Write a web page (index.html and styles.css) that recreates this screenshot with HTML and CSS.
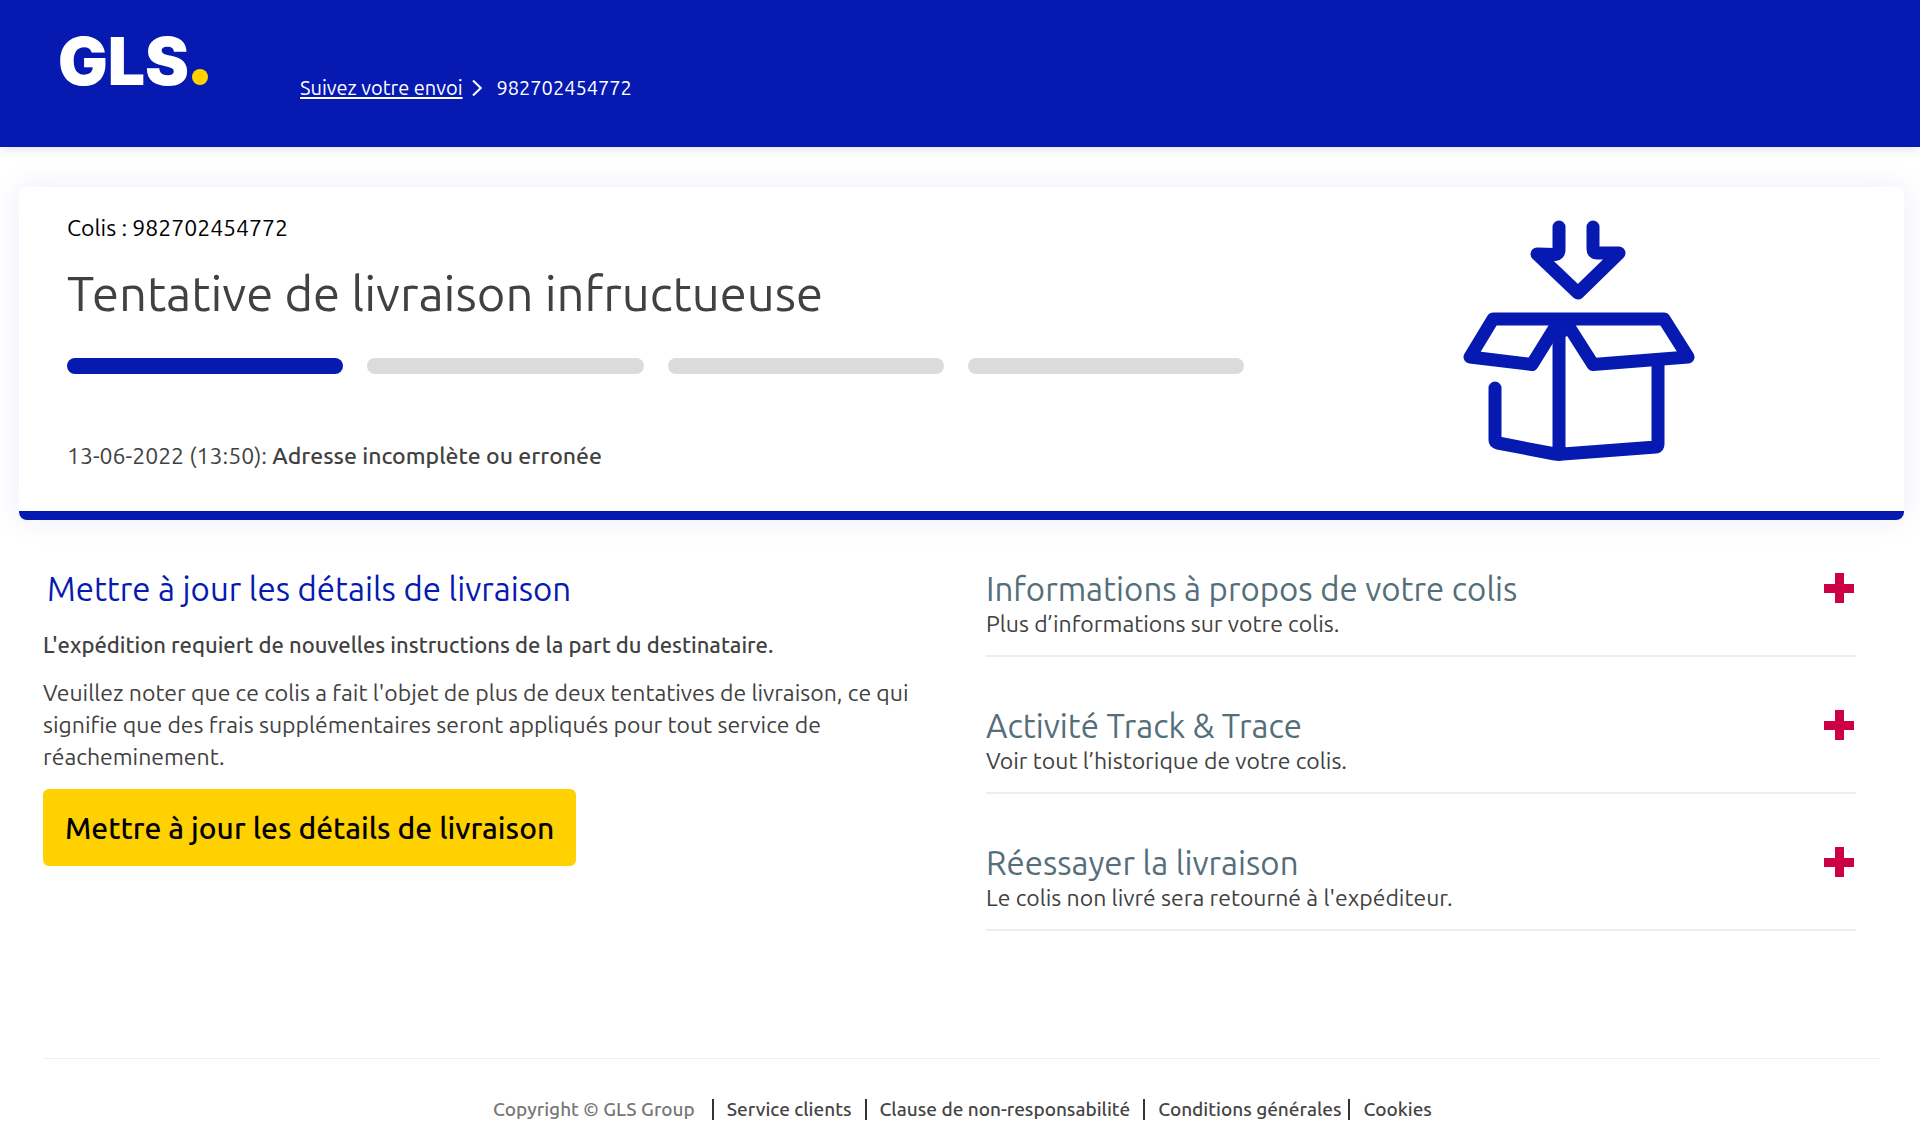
FILE: index.html
```html
<!DOCTYPE html>
<html lang="fr">
<head>
<meta charset="utf-8">
<meta name="viewport" content="width=device-width, initial-scale=1">
<title>GLS – Suivi de colis</title>
<link rel="stylesheet" href="styles.css">
</head>
<body>
<header class="site-header">
  <a class="logo" href="#" aria-label="GLS">GLS<span class="logo-dot"></span></a>
  <nav class="breadcrumb" aria-label="Fil d'Ariane">
    <a class="breadcrumb-link" href="#">Suivez votre envoi</a>
    <svg class="chevron" viewBox="0 0 10 16" aria-hidden="true"><path d="M1 .5 8.8 8 1 15.500" fill="none" stroke="currentColor" stroke-width="2"/></svg>
    <span>982702454772</span>
  </nav>
</header>
<main>
  <section class="status-card">
    <div class="status-body">
      <p class="parcel">Colis : 982702454772</p>
      <h1 class="status-title">Tentative de livraison infructueuse</h1>
      <div class="steps"><span class="step step-done"></span><span class="step"></span><span class="step"></span><span class="step"></span></div>
      <p class="status-event">13-06-2022 (13:50): <strong>Adresse incomplète ou erronée</strong></p>
    </div>
    <div class="status-picture">
      <svg class="box-icon" viewBox="0 0 232 242" aria-hidden="true">
        <g fill="none" stroke="#061ab1" stroke-width="13" stroke-linecap="round" stroke-linejoin="round">
          <path d="M96 7v23q0 4-4 4.500L74 34l41 39 41-40h-22q-4 0-4-4V7"/>
          <path d="M30 99H201L225 137l-95 7.500L101 99 M30 99 7 137l62 7.500L96 101"/>
          <path d="M96 101V231 M32 168v52q0 2 3 3l57 11q4 1 8 0l93-7q2 0 2-3v-79"/>
        </g>
        <path d="M88 99h26l-11 18-7-2-8 8z" fill="#061ab1"/>
      </svg>
    </div>
  </section>
  <div class="columns">
    <section class="update">
      <h2 class="update-title">Mettre à jour les détails de livraison</h2>
      <p class="update-lead">L'expédition requiert de nouvelles instructions de la part du destinataire.</p>
      <p class="update-text">Veuillez noter que ce colis a fait l'objet de plus de deux tentatives de livraison, ce qui signifie que des frais supplémentaires seront appliqués pour tout service de réacheminement.</p>
      <button class="update-button" type="button">Mettre à jour les détails de livraison</button>
    </section>
    <section class="panels">
      <article class="panel">
        <div><h2 class="panel-title">Informations à propos de votre colis</h2><p class="panel-text">Plus d’informations sur votre colis.</p></div>
        <button class="panel-toggle" type="button" aria-label="Afficher les informations"></button>
      </article>
      <article class="panel">
        <div><h2 class="panel-title">Activité Track &amp; Trace</h2><p class="panel-text">Voir tout l’historique de votre colis.</p></div>
        <button class="panel-toggle" type="button" aria-label="Afficher l’activité"></button>
      </article>
      <article class="panel">
        <div><h2 class="panel-title">Réessayer la livraison</h2><p class="panel-text">Le colis non livré sera retourné à l'expéditeur.</p></div>
        <button class="panel-toggle" type="button" aria-label="Afficher la livraison"></button>
      </article>
    </section>
  </div>
</main>
<footer class="site-footer">
  <span class="copyright">Copyright © GLS Group</span>
  <a class="footer-link" href="#">Service clients</a>
  <a class="footer-link" href="#">Clause de non-responsabilité</a>
  <a class="footer-link" href="#">Conditions générales</a>
  <a class="footer-link footer-link-last" href="#">Cookies</a>
</footer>
</body>
</html>
```

FILE: styles.css
```css
* { box-sizing: border-box; }
body {
  margin: 0;
  background: #fff;
  color: #414141;
  font-family: Ubuntu, "Noto Sans", "Open Sans", sans-serif;
  font-size: 23px;
  line-height: 32px;
}
h1, h2, p { margin: 0; font-weight: 400; }
button { border: 0; padding: 0; font: inherit; cursor: pointer; }

.site-header {
  display: flex;
  align-items: flex-start;
  height: 147px;
  padding: 28px 58px 0;
  gap: 92px;
  background: #061ab1;
  color: #fff;
  box-shadow: 0 2px 10px rgba(0, 0, 0, .12);
}
.logo {
  display: flex;
  align-items: baseline;
  gap: 3px;
  color: #fff;
  font: 900 66px/66px Inter, "Open Sans", sans-serif;
  text-decoration: none;
}
.logo-dot { width: 16px; height: 16px; border-radius: 50%; background: #ffd100; }
.breadcrumb { display: flex; align-items: center; margin-top: 44px; font-size: 20px; }
.breadcrumb-link { color: #fff; text-decoration-thickness: 2px; text-underline-offset: 2px; }
.chevron { width: 10px; height: 16px; margin: 0 15px 0 9px; }

.status-card {
  display: grid;
  grid-template-columns: 1177fr 660fr;
  margin: 40px 16px 0 19px;
  padding: 25px 0 39px 48px;
  border-bottom: 9px solid #061ab1;
  border-radius: 8px;
  background: #fff;
  box-shadow: 0 0 32px rgba(6, 26, 177, .08);
}
.parcel { color: #000; }
.status-title { margin-top: 17px; font-size: 49px; line-height: 64px; }
.steps { display: grid; grid-template-columns: repeat(4, 1fr); gap: 24px; margin-top: 33px; }
.step { height: 16px; border-radius: 8px; background: #dbdbdb; }
.step-done { background: #061ab1; }
.status-event { margin-top: 66px; }
.status-event strong { font-weight: 500; }
.status-picture { display: flex; justify-content: center; padding: 8px 0 0 10px; }
.box-icon { width: 232px; height: 242px; }

.columns {
  display: grid;
  grid-template-columns: 1fr 1fr;
  gap: 73px;
  padding: 44px 64px 0 43px;
}
.update-title { padding: 5px 0 0 4px; color: #061ab1; font-size: 33px; line-height: 40px; }
.update-lead { margin-top: 20px; font-size: 22px; font-weight: 500; }
.update-text { margin-top: 16px; }
.update-button {
  height: 77px;
  margin-top: 16px;
  padding: 0 22px;
  border-radius: 6px;
  background: #ffd100;
  color: #000;
  font-size: 30px;
  font-weight: 500;
}
.panel {
  display: flex;
  justify-content: space-between;
  padding-bottom: 15px;
  margin-bottom: 44px;
  border-bottom: 2px solid #eee;
}
.panel-title { padding-top: 6px; color: #546e7a; font-size: 33px; line-height: 38px; }
.panel-toggle {
  width: 30px;
  height: 30px;
  margin: 9px 2px 0 0;
  background: linear-gradient(#cc0044, #cc0044) center / 30px 9px no-repeat, linear-gradient(#cc0044, #cc0044) center / 9px 30px no-repeat;
}

.site-footer {
  display: flex;
  justify-content: center;
  margin: 83px 40px 0 43px;
  padding: 34px 0 20px 2px;
  border-top: 1px solid #eee;
  font-size: 19px;
  font-weight: 500;
}
.copyright { margin-right: 4px; color: #777; }
.footer-link { display: flex; align-items: center; color: #444; text-decoration: none; }
.footer-link::before { content: ""; width: 2px; height: 21px; margin: 0 13px; background: #333; }
.footer-link-last::before { margin-left: 7px; }
```
